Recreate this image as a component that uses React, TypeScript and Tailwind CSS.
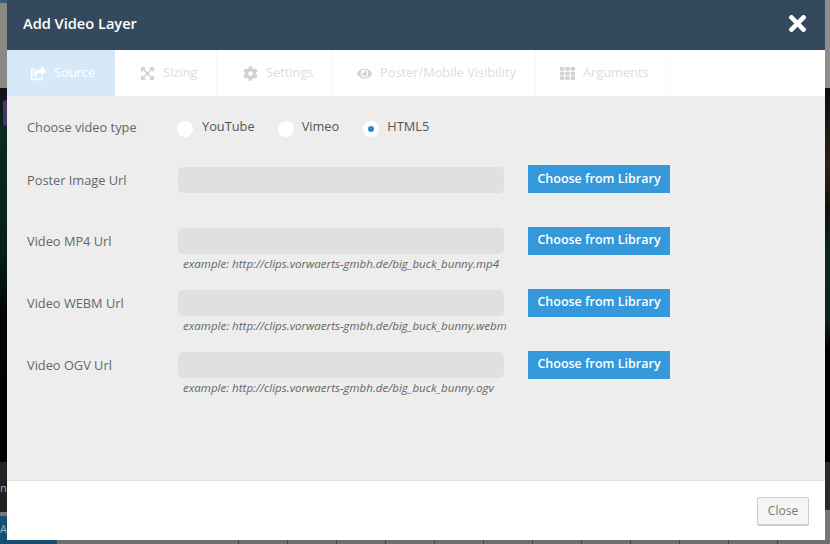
import { FaShareSquare, FaExpandArrowsAlt, FaCog, FaEye, FaTh, FaTimes } from 'react-icons/fa';

const tabs = [
  { label: 'Source', icon: FaShareSquare, box: 'w-[108px] pl-[24px] border-[#d6e9f8] bg-[#d6e9f8] text-white', active: true },
  { label: 'Sizing', icon: FaExpandArrowsAlt, box: 'w-[102px] pl-[25px] border-[#f8f8f8] bg-white text-[#dddddd]', active: false },
  { label: 'Settings', icon: FaCog, box: 'w-[115px] pl-[26px] border-[#f8f8f8] bg-white text-[#dddddd]', active: false },
  { label: 'Poster/Mobile Visibility', icon: FaEye, box: 'w-[204px] pl-[25px] border-[#f8f8f8] bg-white text-[#dddddd]', active: false },
  { label: 'Arguments', icon: FaTh, box: 'w-[134px] pl-[24px] border-[#f8f8f8] bg-white text-[#dddddd]', active: false },
];

const urlRows = [
  { label: 'Video MP4 Url', example: 'example: http://clips.vorwaerts-gmbh.de/big_buck_bunny.mp4' },
  { label: 'Video WEBM Url', example: 'example: http://clips.vorwaerts-gmbh.de/big_buck_bunny.webm' },
  { label: 'Video OGV Url', example: 'example: http://clips.vorwaerts-gmbh.de/big_buck_bunny.ogv' },
];

const ticks = Array.from({ length: 12 }, (_, i) => i);

function Radio({ label, checked, gap }: { label: string; checked?: boolean; gap: string }) {
  return (
    <div className={`flex items-center ${gap}`}>
      <span className="mt-[1px] flex h-[16px] w-[16px] items-center justify-center rounded-full bg-white">
        {checked && <span className="h-[6px] w-[6px] rounded-full bg-[#2f86c4]" />}
      </span>
      <span className="-mt-[5px] text-[12.8px] leading-[16px] text-[#555]">{label}</span>
    </div>
  );
}

function LibraryButton() {
  return (
    <button className="h-[28px] w-[142px] bg-[#3498db] text-center text-[12.5px] font-semibold text-white">
      Choose from Library
    </button>
  );
}

function UrlField({ label, example }: { label: string; example?: string }) {
  return (
    <div className="flex items-start">
      <div className="w-[151px] pt-[6px] text-[12.8px] leading-[18px] text-[#666]">{label}</div>
      <div className="w-[326px] pt-[2px]">
        <div className="h-[26px] rounded-[5px] bg-[#e0e0e0]" />
        {example && (
          <div className="mt-[3px] whitespace-nowrap pl-[5px] text-[11.55px] leading-[14px] italic text-[#666]">
            {example}
          </div>
        )}
      </div>
      <div className="ml-[24px]">
        <LibraryButton />
      </div>
    </div>
  );
}

export default function App() {
  return (
    <div className="relative h-[544px] w-[830px] overflow-hidden bg-[#6f6f6f] font-['Open_Sans',sans-serif]">
      {/* page behind the dialog */}
      <div className="flex h-[540px] justify-between">
        <div className="flex w-[7px] flex-col">
          <div className="h-[3px] bg-[#3d5a78]" />
          <div className="h-[85px] bg-[#8a8a84]" />
          <div className="h-[374px] bg-[linear-gradient(180deg,#140f18_0%,#0a2a22_12%,#06201a_45%,#020604_60%,#000_100%)] pt-[12px]">
            <div className="ml-[3px] h-[26px] w-[4px] rounded-l-[3px] bg-[#4a3560]" />
          </div>
          <div className="h-[50px] overflow-hidden bg-[#222] pt-[19px] text-[11px] leading-[14px] text-[#aaa]">n</div>
          <div className="h-[4px] bg-[#777]" />
          <div className="flex-1 overflow-hidden bg-[#17506f] pt-[6px] text-[11px] leading-[14px] text-[#8fb4c8]">A</div>
        </div>
        <div className="flex w-[5px] flex-col">
          <div className="h-[88px] bg-[#8d8d8d]" />
          <div className="h-[374px] bg-[linear-gradient(180deg,#0c0c0c_0%,#2a2218_20%,#14110c_32%,#0b2622_45%,#0a2220_62%,#000_70%,#000_100%)]" />
          <div className="h-[48px] bg-[#2a2a2a]" />
          <div className="flex-1 bg-[#777]" />
        </div>
      </div>
      <div className="flex h-[4px]">
        <div className="w-[57px] bg-[#17506f]" />
        <div className="ml-[181px] flex">
          {ticks.map((t) => (
            <div key={t} className="h-full w-[49px] border-l border-[#444]" />
          ))}
        </div>
      </div>

      {/* dialog */}
      <div className="absolute left-[7px] top-0 flex h-[540px] w-[818px] flex-col bg-white">
        <div className="flex h-[50px] shrink-0 items-center justify-between bg-[#34495e] pb-[3px] pl-[16px] pr-[15px]">
          <h2 className="text-[14.6px] font-semibold text-white">Add Video Layer</h2>
          <FaTimes className="h-[25px] w-[25px] text-white" />
        </div>

        <div className="flex h-[46px] shrink-0 bg-white">
          {tabs.map((tab) => {
            const Icon = tab.icon;
            return (
              <div key={tab.label} className={`flex items-center gap-[8px] border-r text-[12.8px] ${tab.box}`}>
                <Icon className={`h-[15px] w-[15px] ${tab.active ? 'text-white' : 'text-[#d2d2d2]'}`} />
                {tab.label}
              </div>
            );
          })}
        </div>

        <div className="flex-1 bg-[#ededed] pl-[20px]">
          <div className="mb-[5px] flex h-[64px] items-center">
            <div className="w-[150px] text-[12.8px] text-[#666]">Choose video type</div>
            <div className="flex items-center">
              <Radio label="YouTube" gap="gap-[9px]" />
              <div className="ml-[23px]">
                <Radio label="Vimeo" gap="gap-[8px]" />
              </div>
              <div className="ml-[24px]">
                <Radio label="HTML5" checked gap="gap-[8px]" />
              </div>
            </div>
          </div>
          <UrlField label="Poster Image Url" />
          <div className="mt-[33px] flex flex-col gap-[17px]">
            {urlRows.map((row) => (
              <UrlField key={row.label} label={row.label} example={row.example} />
            ))}
          </div>
        </div>

        <div className="flex h-[60px] shrink-0 items-center justify-end border-t border-[#e2e2e2] bg-white pr-[16px]">
          <button className="h-[28px] w-[52px] rounded-[2px] border border-[#cfcfcf] bg-[#f5f5f5] text-[12px] text-[#777] shadow-[0_1px_0_#c8c8c8]">
            Close
          </button>
        </div>
      </div>
    </div>
  );
}
